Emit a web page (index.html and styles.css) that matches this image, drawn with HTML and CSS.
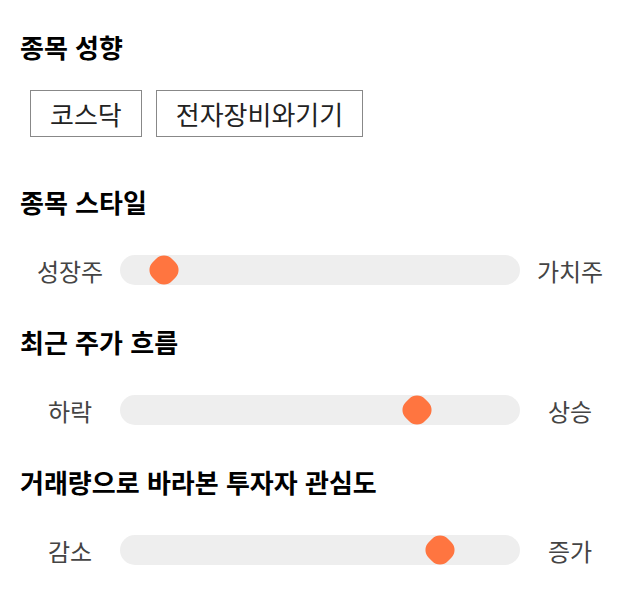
FILE: index.html
```html
<!DOCTYPE html>
<html lang="ko">
<head>
    <meta charset="UTF-8">
    <title>종목 분석</title>
    <link rel="stylesheet" href="styles.css">
</head>
<body>

<div class="analysis">
    <h2 class="analysis-title">종목 성향</h2>
    <div class="tag-list">
        <span class="tag">코스닥</span>
        <span class="tag">전자장비와기기</span>
    </div>

    <h2 class="analysis-title">종목 스타일</h2>
    <div class="scale">
        <div class="scale-label">성장주</div>
        <div class="scale-track"><span class="scale-thumb" style="left: 11%"></span></div>
        <div class="scale-label">가치주</div>
    </div>

    <h2 class="analysis-title">최근 주가 흐름</h2>
    <div class="scale">
        <div class="scale-label">하락</div>
        <div class="scale-track"><span class="scale-thumb" style="left: 74.25%"></span></div>
        <div class="scale-label">상승</div>
    </div>

    <h2 class="analysis-title">거래량으로 바라본 투자자 관심도</h2>
    <div class="scale">
        <div class="scale-label">감소</div>
        <div class="scale-track"><span class="scale-thumb" style="left: 80%"></span></div>
        <div class="scale-label">증가</div>
    </div>
</div>

</body>
</html>
```

FILE: styles.css
```css
body {
    margin: 0;
    background-color: #fff;
    font-family: "Noto Sans CJK KR", "Noto Sans", sans-serif;
    color: #111;
}
.analysis {
    padding: 30px 20px 20px;
}
.analysis-title {
    margin: 0;
    font-size: 26px;
    font-weight: bold;
    line-height: 34px;
    color: #000;
}

/* 태그 */
.tag-list {
    display: flex;
    gap: 14px;
    margin: 26px 0 48px 10px;
}
.tag {
    display: flex;
    align-items: center;
    height: 45px;
    padding: 0 19px;
    border: 1px solid #888;
    font-size: 26px;
    color: #222;
}

/* 스케일 바 */
.scale {
    display: flex;
    align-items: center;
    height: 40px;
    margin: 31px 0 35px;
}
.scale-label {
    width: 100px;
    text-align: center;
    font-size: 24px;
    color: #444;
}
.scale-track {
    position: relative;
    flex: 1;
    height: 30px;
    border-radius: 15px;
    background-color: #eee;
}
.scale-thumb {
    position: absolute;
    top: 50%;
    width: 27px;
    height: 27px;
    border-radius: 11px;
    background-color: #ff7540;
    transform: translate(-50%, -50%) rotate(45deg);
}
```
